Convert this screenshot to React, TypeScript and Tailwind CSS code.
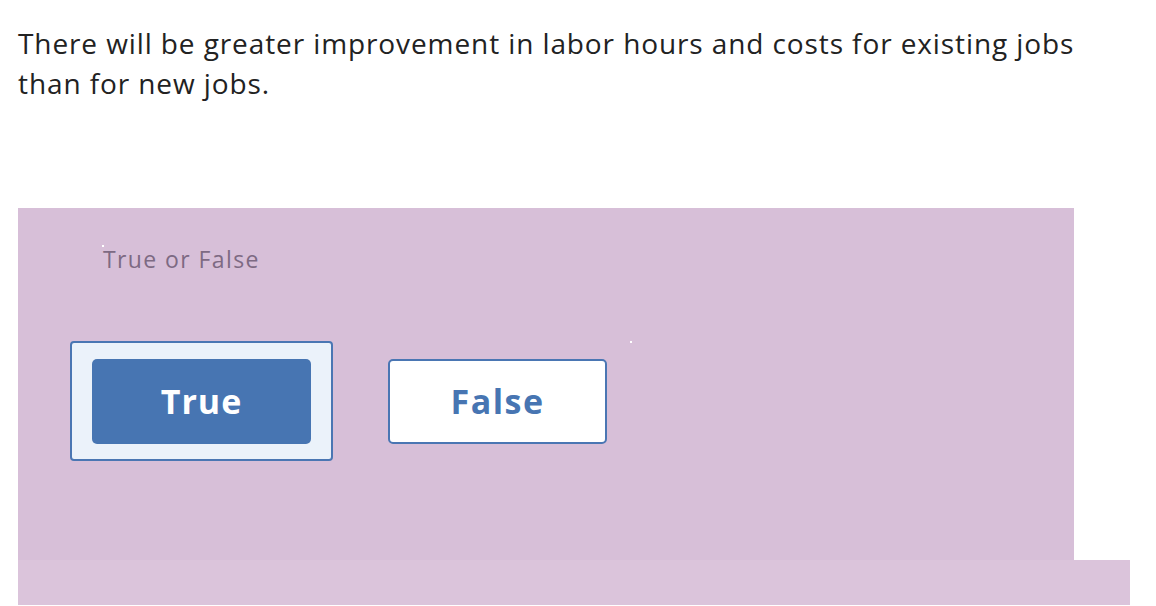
export default function App() {
  return (
    <div className="bg-white min-h-[606px] pl-[18px] pt-[23px]" style={{ fontFamily: "'Open Sans', Lato, sans-serif" }}>
      <p className="text-[28px] leading-[40px] tracking-[0.9px] text-[#222222] w-[1120px]">
        There will be greater improvement in labor hours and costs for existing jobs
        <br />
        than for new jobs.
      </p>

      <div className="mt-[105px] w-[1056px] h-[352px] bg-[#d7bfd8] pt-[36px]">
        <div className="relative pl-[85px] text-[23px] leading-[30px] tracking-[1.4px] text-[#7d6a83]">
          <span className="absolute left-[84px] top-[1px] w-[2px] h-[2px] bg-white" />
          True or False
        </div>

        <div className="relative mt-[67px] pl-[52px] flex items-center gap-[55px]">
          <div className="w-[263px] h-[120px] rounded-[4px] border-2 border-[#4a76b3] bg-[#ebf2fa] flex items-center justify-center">
            <button className="w-[219px] h-[85px] rounded-[5px] bg-[#4775b2] text-white text-[34px] tracking-[1px] font-bold">
              True
            </button>
          </div>
          <button className="w-[219px] h-[85px] rounded-[5px] border-2 border-[#4a76b3] bg-white text-[#4775b2] text-[34px] tracking-[1.5px] font-bold">
            False
          </button>
          <span className="absolute left-[612px] top-0 w-[2px] h-[2px] bg-white" />
        </div>
      </div>

      <div className="w-[1112px] h-[45px] bg-[#dbc4db]" />
    </div>
  );
}
